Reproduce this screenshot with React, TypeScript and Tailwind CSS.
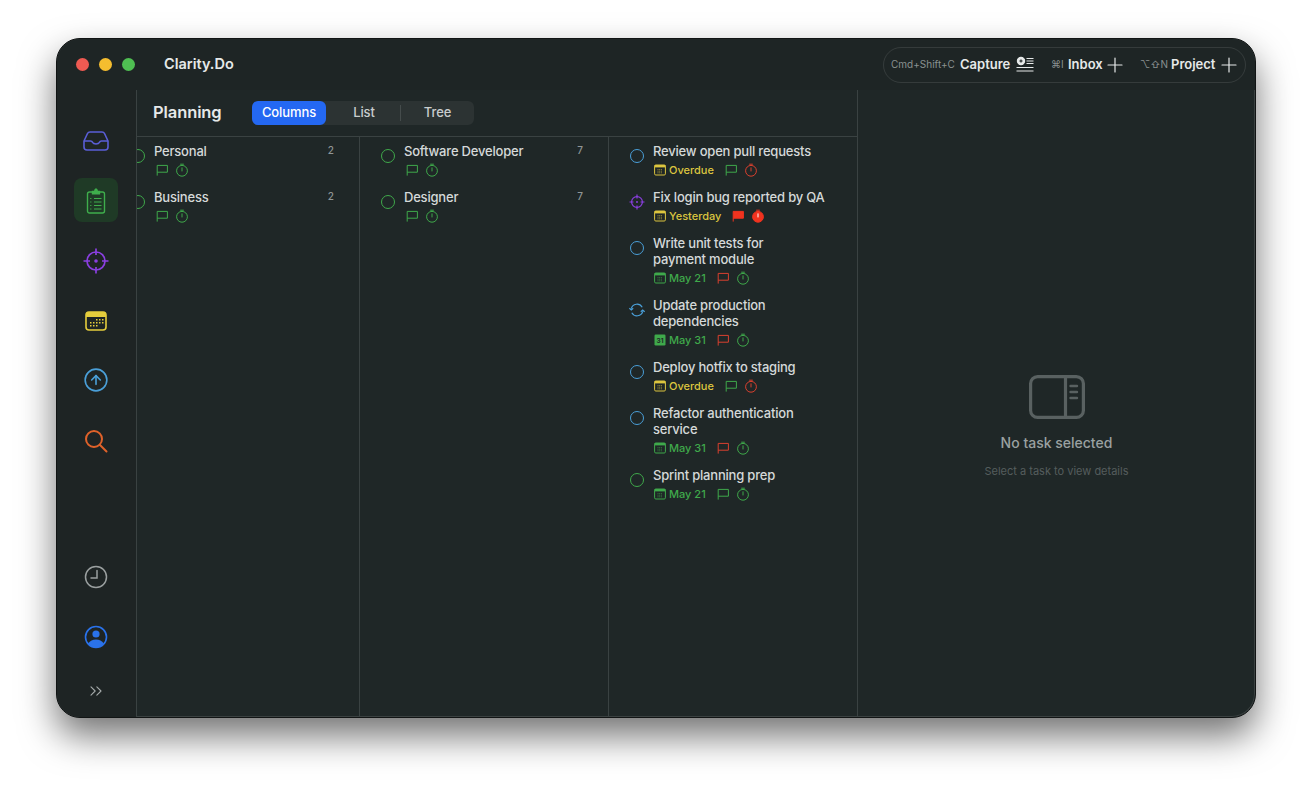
import { ChevronsRight, Plus, CircleArrowUp } from 'lucide-react';

const GREEN = '#3fa94b';
const RED = '#d9402f';
const YELLOW = '#dcc53f';
const BLUE = '#4a9fd8';
const PURPLE = '#8a3fe0';

type Task = {
  title: string[];
  date: string;
  dateColor: string;
  calFilled?: boolean;
  flag: string;
  flagFilled?: boolean;
  timer: string;
  timerFilled?: boolean;
  status: 'blue' | 'green' | 'target' | 'sync';
};

const TASKS: Task[] = [
  { title: ['Review open pull requests'], date: 'Overdue', dateColor: YELLOW, flag: GREEN, timer: RED, status: 'blue' },
  { title: ['Fix login bug reported by QA'], date: 'Yesterday', dateColor: YELLOW, flag: '#f0331f', flagFilled: true, timer: '#f0331f', timerFilled: true, status: 'target' },
  { title: ['Write unit tests for', 'payment module'], date: 'May 21', dateColor: GREEN, flag: RED, timer: GREEN, status: 'blue' },
  { title: ['Update production', 'dependencies'], date: 'May 31', dateColor: GREEN, calFilled: true, flag: RED, timer: GREEN, status: 'sync' },
  { title: ['Deploy hotfix to staging'], date: 'Overdue', dateColor: YELLOW, flag: GREEN, timer: RED, status: 'blue' },
  { title: ['Refactor authentication', 'service'], date: 'May 31', dateColor: GREEN, flag: RED, timer: GREEN, status: 'blue' },
  { title: ['Sprint planning prep'], date: 'May 21', dateColor: GREEN, flag: GREEN, timer: GREEN, status: 'green' },
];

function FlagIcon({ color, filled }: { color: string; filled?: boolean }) {
  return (
    <svg width="14" height="14" viewBox="0 0 14 14" fill="none" className="shrink-0">
      <path d="M2.2 12.6V2.4H12.4V9.2H2.2" stroke={color} strokeWidth="1" fill={filled ? color : 'none'} />
    </svg>
  );
}

function TimerIcon({ color, filled }: { color: string; filled?: boolean }) {
  return (
    <svg width="14" height="14" viewBox="0 0 14 14" fill="none" className="shrink-0">
      <circle cx="7" cy="7.8" r="5.4" stroke={color} strokeWidth="1" fill={filled ? color : 'none'} />
      <path d="M7 4.8V8" stroke={filled ? '#ffffff' : color} strokeWidth="1" strokeLinecap="round" />
      <path d="M5.6 1.2H8.4" stroke={color} strokeWidth="1" strokeLinecap="round" />
    </svg>
  );
}

function CalIcon({ color, filled }: { color: string; filled?: boolean }) {
  if (filled) {
    return (
      <svg width="12" height="12" viewBox="0 0 12 12" className="shrink-0">
        <rect x="0.5" y="0.5" width="11" height="11" rx="1.2" fill={color} />
        <text x="6" y="8.6" textAnchor="middle" fontSize="6.5" fontWeight="700" fill="#1f2727" fontFamily="Inter, sans-serif">31</text>
      </svg>
    );
  }
  return (
    <svg width="12" height="12" viewBox="0 0 12 12" fill="none" className="shrink-0">
      <rect x="0.6" y="1" width="10.8" height="10" rx="1.2" stroke={color} strokeWidth="1" />
      <rect x="0.6" y="1" width="10.8" height="2.4" fill={color} />
      <path d="M3.5 5.6h5M3.5 7.2h5M3.5 8.8h5" stroke={color} strokeWidth="0.8" strokeDasharray="1 0.7" opacity="0.8" />
    </svg>
  );
}

function StatusIcon({ status }: { status: Task['status'] }) {
  if (status === 'target') {
    return (
      <svg width="16" height="16" viewBox="0 0 16 16" fill="none" className="shrink-0">
        <circle cx="8" cy="8" r="5.4" stroke={PURPLE} strokeWidth="1.2" />
        <path d="M8 0.5V4.5M8 11.5V15.5M0.5 8H4.5M11.5 8H15.5" stroke={PURPLE} strokeWidth="1.2" />
        <circle cx="8" cy="8" r="1" fill={PURPLE} />
      </svg>
    );
  }
  if (status === 'sync') {
    return (
      <svg width="16" height="16" viewBox="0 0 16 16" fill="none" className="shrink-0">
        <path d="M2.2 6.6A6 6 0 0 1 13.2 5.2" stroke={BLUE} strokeWidth="1.2" />
        <path d="M13.8 9.4A6 6 0 0 1 2.8 10.8" stroke={BLUE} strokeWidth="1.2" />
        <path d="M0.4 6.2L2.3 8L4.2 6.2M11.8 9.8L13.7 8L15.6 9.8" stroke={BLUE} strokeWidth="1.2" />
      </svg>
    );
  }
  return (
    <div className="flex h-4 w-4 shrink-0 items-center justify-center">
      <div className={`h-[14px] w-[14px] rounded-full border-[1.3px] ${status === 'blue' ? 'border-[#4a9fd8]' : 'border-[#3fa94b]'}`} />
    </div>
  );
}

function GroupRow({ name, count }: { name: string; count: number }) {
  return (
    <div className="flex h-[46px] pl-[20px] pr-[25px]">
      <div className="mt-[5px] flex h-4 w-4 shrink-0 items-center justify-center">
        <div className="h-[14px] w-[14px] rounded-full border-[1.3px] border-[#3fa94b]" />
      </div>
      <div className="ml-[8px] flex min-w-0 flex-1 flex-col">
        <div className="flex h-4 justify-between text-[13px] leading-4 font-medium tracking-[-0.2px] text-[#d5d9d9]">
          <span>{name}</span>
          <span className="-mt-[1px] text-[10px] tracking-normal text-[#8f9696]">{count}</span>
        </div>
        <div className="mt-[3px] flex h-4 items-center gap-[6px] pl-[1px]">
          <FlagIcon color={GREEN} />
          <TimerIcon color={GREEN} />
        </div>
      </div>
    </div>
  );
}

function TaskRow({ task }: { task: Task }) {
  return (
    <div className="flex pl-[20px] pb-[11px]">
      <div className="mt-[5px]">
        <StatusIcon status={task.status} />
      </div>
      <div className="ml-[8px] flex min-w-0 flex-col">
        <div className="text-[13px] leading-4 font-medium tracking-[-0.2px] text-[#d5d9d9]">
          {task.title.map((line) => (
            <div key={line}>{line}</div>
          ))}
        </div>
        <div className="mt-[3px] flex h-4 items-center pl-[1px]">
          <CalIcon color={task.dateColor} filled={task.calFilled} />
          <span className="ml-[3px] mr-[10px] text-[11px] font-medium" style={{ color: task.dateColor }}>
            {task.date}
          </span>
          <FlagIcon color={task.flag} filled={task.flagFilled} />
          <div className="ml-[6px]">
            <TimerIcon color={task.timer} filled={task.timerFilled} />
          </div>
        </div>
      </div>
    </div>
  );
}

export default function App() {
  return (
    <div className="h-screen w-full overflow-hidden bg-white pt-[38px] pl-[56px] font-['Inter',sans-serif]">
      <div className="flex h-[680px] w-[1200px] flex-col overflow-hidden rounded-[24px] border border-[#111414] bg-[#1f2727] shadow-[0_18px_36px_rgba(0,0,0,0.55),inset_0_0_0_1px_rgba(255,255,255,0.12)]">
        {/* title bar */}
        <div className="flex h-[51px] shrink-0 items-center justify-between bg-[#1e2525] pl-[19px] pr-[9px]">
          <div className="flex items-center">
            <div className="h-[13px] w-[13px] rounded-full bg-[#ee5a52]" />
            <div className="ml-[10px] h-[13px] w-[13px] rounded-full bg-[#f5bd2f]" />
            <div className="ml-[10px] h-[13px] w-[13px] rounded-full bg-[#4fbf52]" />
            <span className="ml-[29px] -mt-[1px] text-[14.5px] font-semibold text-[#e6e9e9]">Clarity.Do</span>
          </div>
          <div className="flex h-[36px] w-[363px] items-center rounded-full border border-white/10 pl-[7px] text-[#e6e9e9]">
            <span className="w-[69px] text-[10px] text-[#8a9191]">Cmd+Shift+C</span>
            <span className="w-[56px] text-[13px] font-semibold">Capture</span>
            <svg width="18" height="18" viewBox="0 0 18 18" fill="none" stroke="#e6e9e9" strokeWidth="1.2">
              <circle cx="5" cy="5" r="3.6" fill="#e6e9e9" />
              <path d="M3.4 5H6.6M5 3.4V6.6" stroke="#1e2525" />
              <path d="M10.5 2.5H17.5M10.5 5H17.5M10.5 7.5H17.5M0.5 11.5H17.5M0.5 15H17.5" />
            </svg>
            <span className="ml-[17px] w-[17px] text-[10px] text-[#8a9191]">⌘I</span>
            <span className="w-[35px] text-[13px] font-semibold">Inbox</span>
            <Plus size={24} strokeWidth={1.2} />
            <span className="ml-[13px] w-[31px] text-[10px] text-[#8a9191]">⌥⇧N</span>
            <span className="w-[46px] text-[13px] font-semibold">Project</span>
            <Plus size={24} strokeWidth={1.2} />
          </div>
        </div>

        <div className="flex min-h-0 flex-1">
          {/* sidebar */}
          <div className="flex w-[80px] shrink-0 flex-col items-center border-r border-[#3a4242] bg-[#1e2424] pt-[28px] pr-[1px] pb-[16px]">
            <div className="flex flex-col gap-4">
              <div className="flex h-11 w-11 items-center justify-center pt-[2px]">
                <svg width="26" height="20" viewBox="0 0 26 20" fill="none" stroke="#5a5ed6" strokeWidth="1.6" strokeLinejoin="round">
                  <path d="M1 10L4.5 2.5Q5.2 1 7 1H19Q20.8 1 21.5 2.5L25 10V16Q25 19 22 19H4Q1 19 1 16Z" />
                  <path d="M1 10H7.5Q9 10 9.6 11.4Q10.4 13 13 13Q15.6 13 16.4 11.4Q17 10 18.5 10H25" />
                </svg>
              </div>
              <div className="flex h-11 w-11 items-center justify-center rounded-lg bg-[#1f3a26] pt-[2px]">
                <svg width="20" height="26" viewBox="0 0 20 26" fill="none" stroke="#3fae4c" strokeWidth="1.4">
                  <rect x="1.5" y="4" width="17" height="21" rx="2" />
                  <path d="M6.5 5.8V3.4H8.6Q9 1 10 1Q11 1 11.4 3.4H13.5V5.8Z" fill="#3fae4c" />
                  <path d="M8 10.5H15.5M8 14H15.5M8 17.5H15.5M8 21H15.5" strokeWidth="1.2" />
                  <path d="M4.2 10.5H5.4M4.2 14H5.4M4.2 17.5H5.4M4.2 21H5.4" strokeWidth="1.2" />
                </svg>
              </div>
              <div className="flex h-11 w-11 items-center justify-center pt-[2px]">
                <svg width="26" height="26" viewBox="0 0 26 26" fill="none" stroke={PURPLE} strokeWidth="1.7">
                  <circle cx="13" cy="13" r="9" />
                  <path d="M13 0.5V7M13 19V25.5M0.5 13H7M19 13H25.5" />
                  <circle cx="13" cy="13" r="1.8" fill={PURPLE} stroke="none" />
                </svg>
              </div>
              <div className="flex h-11 w-11 items-center justify-center pt-[2px]">
                <svg width="22" height="20" viewBox="0 0 22 20" fill="none">
                  <rect x="1" y="1" width="20" height="18" rx="3" stroke="#e5cd3c" strokeWidth="1.6" />
                  <path d="M1 6V4Q1 1 4 1H18Q21 1 21 4V6Z" fill="#e5cd3c" />
                  <g fill="#e5cd3c">
                    <rect x="11" y="8" width="1.5" height="1.5" />
                    <rect x="14" y="8" width="1.5" height="1.5" />
                    <rect x="17" y="8" width="1.5" height="1.5" />
                    <rect x="5" y="11" width="1.5" height="1.5" />
                    <rect x="8" y="11" width="1.5" height="1.5" />
                    <rect x="11" y="11" width="1.5" height="1.5" />
                    <rect x="14" y="11" width="1.5" height="1.5" />
                    <rect x="17" y="11" width="1.5" height="1.5" />
                    <rect x="5" y="14" width="1.5" height="1.5" />
                    <rect x="8" y="14" width="1.5" height="1.5" />
                    <rect x="11" y="14" width="1.5" height="1.5" />
                  </g>
                </svg>
              </div>
              <div className="flex h-11 w-11 items-center justify-center">
                <CircleArrowUp size={26} strokeWidth={1.5} color="#4a9fd8" />
              </div>
              <div className="flex h-11 w-11 items-center justify-center pt-[2px]">
                <svg width="24" height="24" viewBox="0 0 24 24" fill="none" stroke="#e0622a" strokeWidth="2" strokeLinecap="round">
                  <circle cx="10" cy="10" r="8" />
                  <path d="M16 16L22.5 22.5" />
                </svg>
              </div>
            </div>
            <div className="mt-auto flex flex-col items-center">
              <div className="flex h-11 w-11 items-center justify-center">
                <svg width="24" height="24" viewBox="0 0 24 24" fill="none" stroke="#9a9f9f" strokeWidth="1.5">
                  <circle cx="12" cy="12" r="10.5" />
                  <path d="M13 5.5V13H7" strokeLinecap="round" />
                </svg>
              </div>
              <div className="mt-4 flex h-11 w-11 items-center justify-center">
                <svg width="24" height="24" viewBox="0 0 24 24" fill="none">
                  <circle cx="12" cy="12" r="10.5" stroke="#2a72ea" strokeWidth="1.6" />
                  <circle cx="12" cy="9" r="3.6" fill="#2a72ea" />
                  <path d="M4.2 18.5Q7 14.4 12 14.4Q17 14.4 19.8 18.5Q16.8 22.5 12 22.5Q7.2 22.5 4.2 18.5Z" fill="#2a72ea" />
                </svg>
              </div>
              <div className="mt-[22px] mr-[1px] flex h-[20px] items-center justify-center">
                <ChevronsRight size={20} strokeWidth={1.3} color="#a5aaaa" />
              </div>
            </div>
          </div>

          {/* planning area */}
          <div className="flex w-[721px] shrink-0 flex-col border-r border-[#3a4242]">
            <div className="flex h-[47px] shrink-0 items-center border-b border-[#3a4242] pl-[16px]">
              <span className="-mt-[1px] w-[99px] text-[16.5px] font-semibold tracking-[-0.1px] text-[#e6e9e9]">Planning</span>
              <div className="flex h-6 w-[222px] items-center rounded-md bg-[#2c3333] text-[13px] font-medium tracking-[-0.1px] text-[#c9cdcd]">
                <div className="flex h-6 w-[74px] items-center justify-center rounded-md bg-[#2468f2] text-white">Columns</div>
                <div className="flex h-4 w-[75px] items-center justify-center border-r border-[#454c4c] pl-[2px]">List</div>
                <div className="flex h-4 w-[73px] items-center justify-center">Tree</div>
              </div>
            </div>
            <div className="flex min-h-0 flex-1 overflow-hidden">
              <div className="-ml-[27px] flex">
                <div className="w-[250px] shrink-0 border-r border-[#3a4242] pt-[6px]">
                  <GroupRow name="Personal" count={2} />
                  <GroupRow name="Business" count={2} />
                </div>
                <div className="w-[249px] shrink-0 border-r border-[#3a4242] pt-[6px]">
                  <GroupRow name="Software Developer" count={7} />
                  <GroupRow name="Designer" count={7} />
                </div>
                <div className="w-[248px] shrink-0 pt-[6px]">
                  {TASKS.map((task) => (
                    <TaskRow key={task.title[0]} task={task} />
                  ))}
                </div>
              </div>
            </div>
          </div>

          {/* detail */}
          <div className="flex min-w-0 flex-1 flex-col items-center pt-[285px]">
            <svg width="56" height="44" viewBox="0 0 56 44" fill="none" stroke="#596161" strokeWidth="3.2">
              <rect x="1.6" y="1.6" width="52.8" height="40.8" rx="7" />
              <path d="M36.5 2V42" />
              <path d="M41.5 11H48M41.5 17H48M41.5 23H48" strokeLinecap="round" strokeWidth="2.4" />
            </svg>
            <div className="mt-[14px] text-[14px] leading-5 font-medium text-[#9aa1a1]">No task selected</div>
            <div className="mt-[10px] text-[11px] leading-4 text-[#555d5d]">Select a task to view details</div>
          </div>
        </div>
      </div>
    </div>
  );
}
